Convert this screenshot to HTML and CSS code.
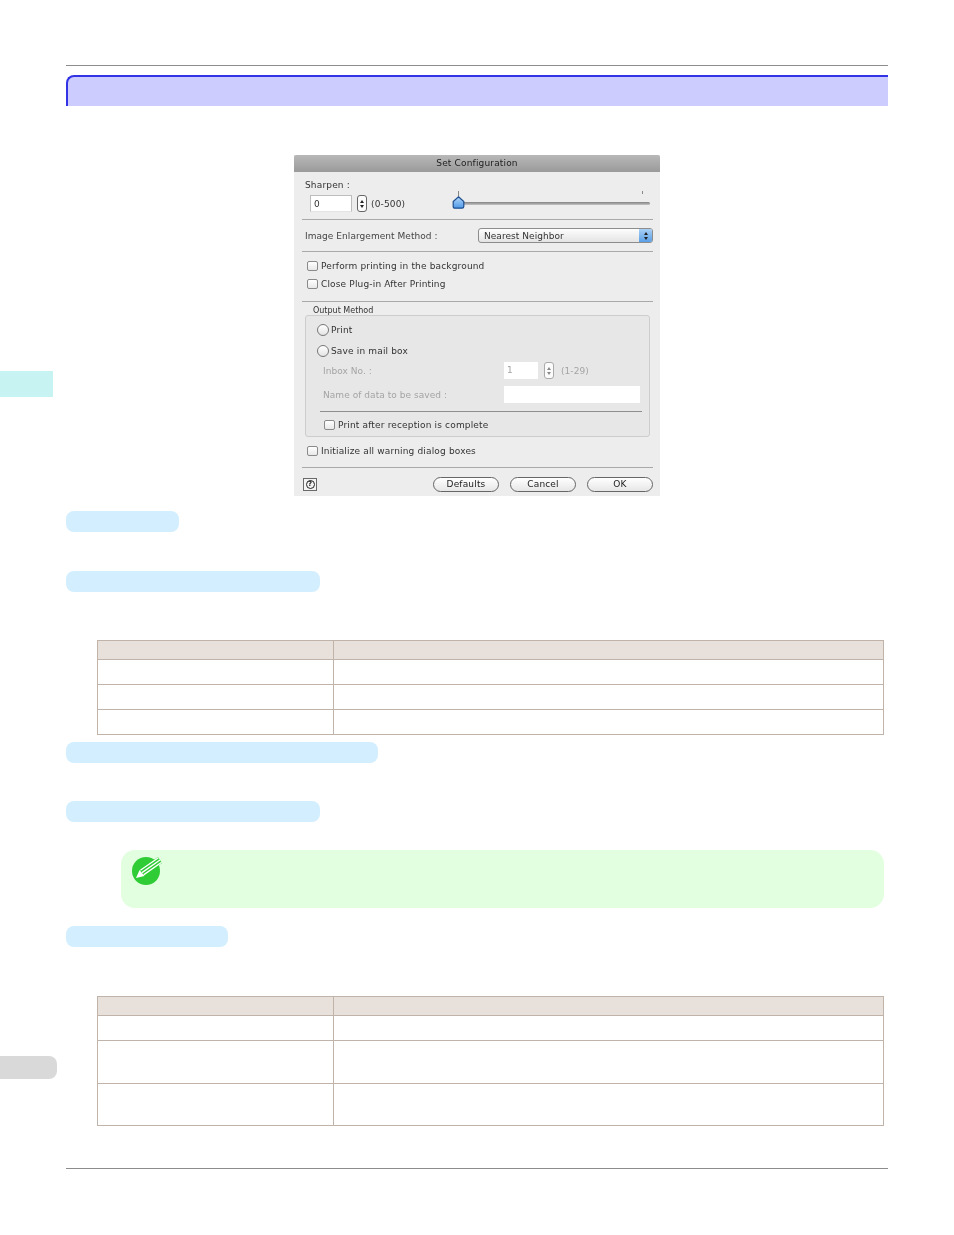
FILE: index.html
```html
<!DOCTYPE html>
<html lang="en">
<head>
  <meta charset="UTF-8" />
  <title>Set Configuration</title>
  <link rel="stylesheet" href="styles.css">
</head>
<body>
  <!-- Margin tabs -->
  <div class="side-tab side-chapter"></div>
  <div class="side-tab side-page"></div>

  <div class="page">
    <div class="top-rule"></div>
    <div class="title-bar"></div>

    <!-- Dialog -->
    <div class="dialog">
      <div class="dlg-title">Set Configuration</div>

      <div class="dlg-sharpen">
        <div class="row-label">Sharpen :</div>
        <div class="sharpen-row">
          <span class="field field-sharpen">0</span>
          <span class="stepper"><i class="up"></i><i class="down"></i></span>
          <span class="range">(0-500)</span>
          <div class="slider">
            <span class="tick tick-min"></span>
            <span class="tick tick-max"></span>
            <svg class="thumb" width="13" height="13" viewBox="0 0 13 13">
              <defs>
                <linearGradient id="thumb-fill" x1="0" y1="0" x2="0" y2="1">
                  <stop offset="0" stop-color="#b4d6f8"/>
                  <stop offset="1" stop-color="#4d98e8"/>
                </linearGradient>
              </defs>
              <path d="M6.5 .8 L11.8 5.5 V10.5 Q11.8 12.2 10 12.2 H3 Q1.2 12.2 1.2 10.5 V5.5 Z" fill="url(#thumb-fill)" stroke="#1f4f8f" stroke-width="1.2"/>
            </svg>
          </div>
        </div>
      </div>
      <div class="dlg-hr"></div>

      <div class="dlg-method">
        <span>Image Enlargement Method :</span>
        <div class="select">
          <span>Nearest Neighbor</span>
          <span class="select-arrows"><i class="up"></i><i class="down"></i></span>
        </div>
      </div>
      <div class="dlg-hr"></div>

      <div class="dlg-checks">
        <label class="check"><i class="box"></i>Perform printing in the background</label>
        <label class="check"><i class="box"></i>Close Plug-in After Printing</label>
      </div>
      <div class="dlg-hr"></div>

      <div class="group-title">Output Method</div>
      <div class="group">
        <label class="radio radio-first"><i class="dot"></i>Print</label>
        <label class="radio"><i class="dot"></i>Save in mail box</label>
        <div class="off-row inbox-row">
          <span class="off-label">Inbox No. :</span>
          <span class="field field-inbox">1</span>
          <span class="stepper stepper-off"><i class="up"></i><i class="down"></i></span>
          <span class="range-off">(1-29)</span>
        </div>
        <div class="off-row name-row">
          <span class="off-label">Name of data to be saved :</span>
          <span class="field field-name"></span>
        </div>
        <div class="group-hr"></div>
        <label class="check check-group"><i class="box"></i>Print after reception is complete</label>
      </div>

      <label class="check check-init"><i class="box"></i>Initialize all warning dialog boxes</label>
      <div class="dlg-hr"></div>

      <div class="dlg-footer">
        <span class="help"><i class="help-mark">?</i></span>
        <div class="buttons">
          <span class="btn">Defaults</span>
          <span class="btn">Cancel</span>
          <span class="btn">OK</span>
        </div>
      </div>
    </div>

    <div class="pill pill-1"></div>
    <div class="pill pill-2"></div>

    <table class="tbl tbl-1">
      <tr class="head"><th></th><th></th></tr>
      <tr><td></td><td></td></tr>
      <tr><td></td><td></td></tr>
      <tr><td></td><td></td></tr>
    </table>

    <div class="pill pill-3"></div>
    <div class="pill pill-4"></div>

    <div class="note">
      <svg class="note-icon" width="32" height="32" viewBox="0 0 32 32">
        <circle cx="15" cy="16" r="14" fill="#2fcc35"/>
        <path d="M9 14.7 L27 2.1 L31 7.9 L13 20.5 Z" fill="#2fcc35"/>
        <path d="M9.4 15.3 L27.4 2.7 M11 17.6 L29 5 M12.6 19.9 L30.6 7.3" stroke="#fff" stroke-width="1.3"/>
        <path d="M5 23 L8.6 15 L13.4 21 Z" fill="#fff"/>
      </svg>
    </div>

    <div class="pill pill-5"></div>

    <table class="tbl tbl-2">
      <tr class="head"><th></th><th></th></tr>
      <tr class="row-short"><td></td><td></td></tr>
      <tr class="row-tall"><td></td><td></td></tr>
      <tr class="row-last"><td></td><td></td></tr>
    </table>

    <div class="bottom-rule"></div>
  </div>
</body>
</html>
```

FILE: styles.css
```css
body {
  margin: 0;
  background: #fff;
  font-family: "DejaVu Sans", sans-serif;
}
.page {
  width: 822px;
  margin-left: 66px;
  padding-top: 65px;
}

/* Margin tabs */
.side-tab { position: absolute; left: 0; }
.side-chapter { top: 371px; width: 53px; height: 26px; background: #c8f3f3; }
.side-page {
  top: 1056px;
  width: 57px;
  height: 23px;
  background: #d9d9d9;
  border-radius: 0 8px 8px 0;
}

/* Rules and title */
.top-rule, .bottom-rule { height: 1px; background: #8c8c8c; }
.bottom-rule { margin-top: 42px; }
.title-bar {
  height: 29px;
  margin-top: 9px;
  background: #ccccff;
  border-top: 2px solid #3333e6;
  border-left: 2px solid #3333e6;
  border-top-left-radius: 8px;
}

/* Dialog */
.dialog {
  width: 366px;
  height: 341px;
  margin: 49px 0 0 228px;
  background: #ededed;
  color: #333;
  font-size: 9px;
  letter-spacing: .16px;
  filter: blur(.3px);
}
.dlg-title {
  height: 17px;
  line-height: 16px;
  text-align: center;
  color: #222;
  background: linear-gradient(#b8b8b8, #9a9a9a);
  border-radius: 2px 2px 0 0;
}
.dlg-hr { height: 1px; margin: 0 7px 0 8px; background: #a9a9a9; }

.dlg-sharpen { height: 47px; padding-left: 11px; }
.row-label { height: 23px; line-height: 26px; }
.sharpen-row { display: flex; align-items: center; height: 17px; padding-left: 5px; }
.field {
  display: block;
  height: 17px;
  line-height: 17px;
  padding-left: 3px;
  box-sizing: border-box;
  background: #fff;
  border: 1px solid #bdbdbd;
  border-bottom-color: #e4e4e4;
}
.field-sharpen { width: 42px; }
.stepper {
  display: flex;
  flex-direction: column;
  align-items: center;
  justify-content: center;
  gap: 2px;
  width: 10px;
  height: 17px;
  margin-left: 5px;
  box-sizing: border-box;
  background: #fbfbfb;
  border: 1px solid #666;
  border-radius: 3px;
}
.up, .down { display: block; width: 0; height: 0; border: 2.5px solid transparent; }
.up { border-top: 0; border-bottom: 3px solid #222; }
.down { border-bottom: 0; border-top: 3px solid #222; }
.range { margin-left: 4px; width: 82px; }
.slider {
  position: relative;
  width: 197px;
  height: 3px;
  background: linear-gradient(#808080, #c4c4c4);
  border-radius: 2px;
}
.thumb { position: absolute; left: -1px; top: -6px; }
.tick { position: absolute; top: -11px; width: 1px; height: 5px; background: #888; }
.tick-min { left: 5px; }
.tick-max { left: 189px; height: 3px; }

.dlg-method {
  display: flex;
  align-items: center;
  justify-content: space-between;
  height: 31px;
  padding: 0 7px 0 11px;
  color: #444;
  letter-spacing: .05px;
}
.select {
  display: flex;
  align-items: center;
  justify-content: space-between;
  width: 175px;
  height: 15px;
  box-sizing: border-box;
  padding-left: 5px;
  background: linear-gradient(#fdfdfd, #e4e4e4);
  border: 1px solid #8d8d8d;
  border-radius: 3px;
  color: #333;
}
.select-arrows {
  display: flex;
  flex-direction: column;
  align-items: center;
  justify-content: center;
  gap: 2px;
  width: 13px;
  height: 13px;
  background: linear-gradient(#a9d0f5, #5a9fe6);
  border-radius: 0 2px 2px 0;
}

.dlg-checks { height: 49px; padding: 5px 0 0 13px; box-sizing: border-box; }
.check { display: flex; align-items: center; height: 18px; }
.box {
  flex: none;
  width: 11px;
  height: 10px;
  margin-right: 3px;
  box-sizing: border-box;
  background: linear-gradient(#fff, #e8e8e8);
  border: 1px solid #8a8a8a;
  border-radius: 2px;
}

.group-title { height: 13px; line-height: 18px; padding-left: 19px; font-size: 8px; letter-spacing: 0; }
.group {
  width: 345px;
  height: 122px;
  margin-left: 11px;
  box-sizing: border-box;
  padding: 4px 8px 0 11px;
  background: #e7e7e7;
  border: 1px solid #cdcdcd;
  border-radius: 3px;
}
.radio { display: flex; align-items: center; height: 21px; }
.radio-first { height: 20px; }
.dot {
  flex: none;
  width: 12px;
  height: 12px;
  margin-right: 2px;
  box-sizing: border-box;
  background: linear-gradient(#fff, #e4e4e4);
  border: 1px solid #777;
  border-radius: 50%;
}
.off-row { display: flex; align-items: center; color: #a4a4a4; padding-left: 6px; letter-spacing: .05px; }
.inbox-row { height: 17px; margin-top: 1px; }
.name-row { height: 17px; margin-top: 7px; }
.off-label { width: 181px; }
.off-row .field { border: 0; background: #fff; color: #a4a4a4; }
.field-inbox { width: 34px; }
.field-name { width: 136px; }
.stepper-off { margin-left: 6px; border-color: #aaa; }
.stepper-off .up { border-bottom-color: #888; }
.stepper-off .down { border-top-color: #888; }
.range-off { margin-left: 7px; }
.group-hr { height: 1px; margin: 8px 0 0 3px; width: 322px; background: #8e8e8e; }
.check-group { height: 26px; padding-left: 7px; }
.check-init { height: 27px; margin: 0 0 3px 13px; }

.dlg-footer {
  display: flex;
  align-items: center;
  justify-content: space-between;
  height: 28px;
  padding: 5px 7px 0 9px;
  box-sizing: border-box;
  color: #222;
}
.help {
  display: flex;
  align-items: center;
  justify-content: center;
  width: 14px;
  height: 13px;
  box-sizing: border-box;
  border: 1px solid #6a6a6a;
  background: #f4f4f4;
}
.help-mark {
  display: block;
  width: 9px;
  height: 9px;
  box-sizing: border-box;
  border: 1px solid #222;
  border-radius: 50%;
  font-size: 7px;
  line-height: 7px;
  font-style: normal;
  font-weight: bold;
  letter-spacing: 0;
  text-align: center;
}
.buttons { display: flex; gap: 11px; }
.btn {
  width: 66px;
  height: 15px;
  box-sizing: border-box;
  line-height: 13px;
  text-align: center;
  background: linear-gradient(#fff, #e6e6e6);
  border: 1px solid #666;
  border-radius: 8px;
}

/* Section pills */
.pill { height: 21px; background: #d3eeff; border-radius: 8px; }
.pill-1 { width: 113px; margin-top: 15px; }
.pill-2 { width: 254px; margin-top: 39px; }
.pill-3 { width: 312px; margin-top: 7px; }
.pill-4 { width: 254px; margin-top: 38px; }
.pill-5 { width: 162px; margin-top: 18px; }

/* Tables */
.tbl {
  width: 787px;
  margin-left: 31px;
  border-collapse: collapse;
  table-layout: fixed;
}
.tbl th, .tbl td { padding: 0; border: 1px solid #c0b3aa; }
.tbl th:first-child, .tbl td:first-child { width: 235px; }
.tbl tr { height: 25px; }
.tbl .head { height: 19px; background: #e7e0db; }
.tbl .row-tall { height: 43px; }
.tbl .row-last { height: 42px; }
.tbl-1 { margin-top: 48px; }
.tbl-2 { margin-top: 49px; }

/* Note */
.note {
  width: 763px;
  height: 58px;
  margin: 28px 0 0 55px;
  padding: 5px 0 0 10px;
  box-sizing: border-box;
  background: #e2ffe0;
  border-radius: 14px;
}
.note-icon { display: block; }
```
